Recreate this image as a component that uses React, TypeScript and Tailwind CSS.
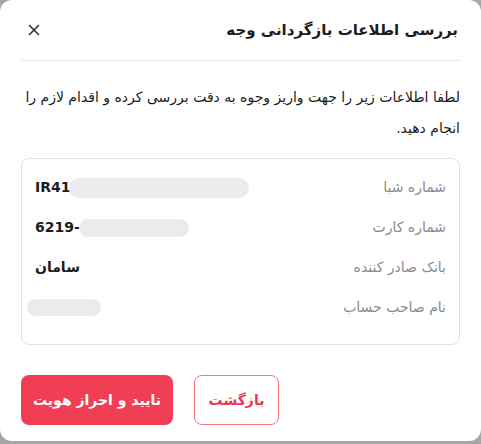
import { X } from "lucide-react";

const rows = [
  { label: "شماره شبا", value: "IR41", blur: "w-[180px] h-[20px]" },
  { label: "شماره کارت", value: "6219-", blur: "w-[110px] h-[18px]" },
  { label: "بانک صادر کننده", value: "سامان", blur: "" },
  { label: "نام صاحب حساب", value: "", blur: "w-[74px] h-[17px] -translate-x-[7px]" },
];

export default function App() {
  return (
    <div className="h-[444px] w-[481px] bg-[#a6a6a6]">
      <div
        dir="rtl"
        className="flex h-[441px] w-[481px] flex-col rounded-xl bg-white px-[21px] text-[#1c1c1c]"
        style={{ fontFamily: '"DejaVu Sans", "Noto Sans", sans-serif' }}
      >
        <div className="flex h-[61px] items-center justify-between border-b border-[#e6e6e6] pr-0.5 pl-1">
          <h2 className="text-[15px] font-bold">بررسی اطلاعات بازگردانی وجه</h2>
          <button className="text-[#2f3542]">
            <X size={18} strokeWidth={2.2} />
          </button>
        </div>

        <p className="mt-[21px] pl-1 text-[14px] leading-[31px]">
          لطفا اطلاعات زیر را جهت واریز وجوه به دقت بررسی کرده و اقدام لازم را انجام دهید.
        </p>

        <div className="mt-[14px] flex flex-col gap-[21px] rounded-lg border border-[#e2e2e2] px-[13px] pt-[19px] pb-[27px]">
          {rows.map((r) => (
            <div key={r.label} className="flex h-[19px] items-center justify-between">
              <span className="text-[14px] text-[#8a8a8a]">{r.label}</span>
              <span dir="ltr" className="flex items-center text-[14px] font-bold">
                {r.value}
                {r.blur && <span className={`${r.blur} -ml-px rounded-full bg-[#ebebeb]`} />}
              </span>
            </div>
          ))}
        </div>

        <div className="mt-[30px] flex justify-end gap-[21px]">
          <button className="h-[50px] w-[85px] rounded-lg border border-[#f27584] text-[14px] font-bold text-[#e8384f]">
            بازگشت
          </button>
          <button className="h-[50px] w-[152px] rounded-lg bg-[#f03e55] text-[14px] font-bold text-white">
            تایید و احراز هویت
          </button>
        </div>
      </div>
    </div>
  );
}
